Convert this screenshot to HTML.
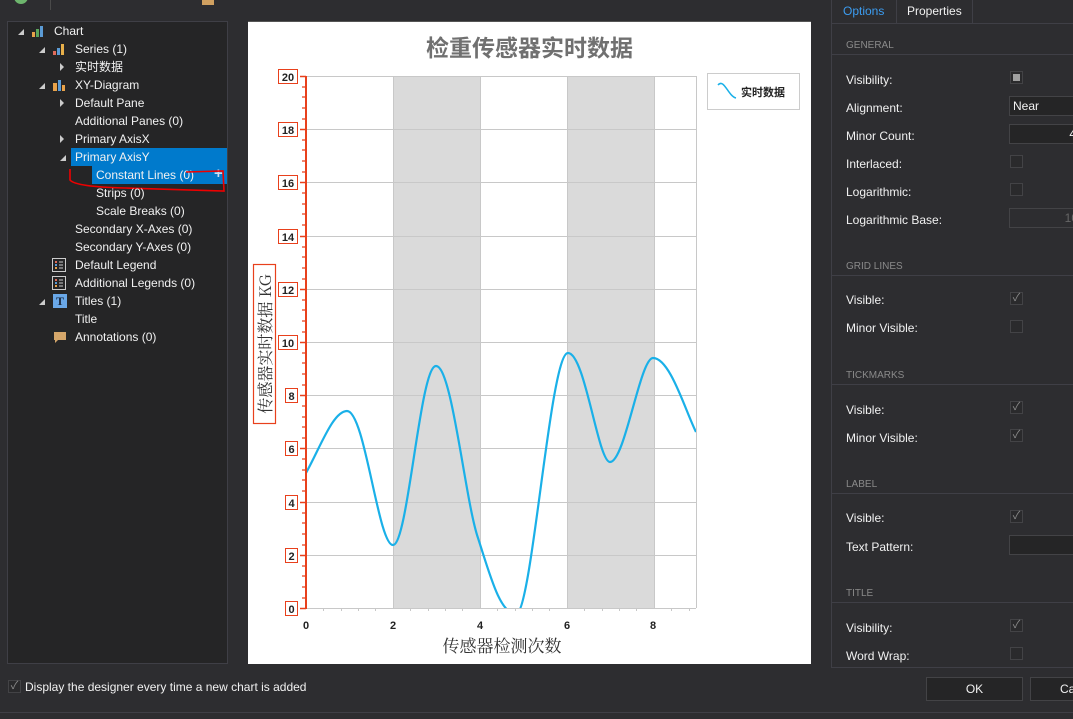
<!DOCTYPE html>
<html><head><meta charset="utf-8"><style>
*{margin:0;padding:0;box-sizing:border-box}
body{width:1073px;height:719px;background:#2d2d30;font-family:"Liberation Sans","Noto Sans CJK SC",sans-serif;font-size:12px;color:#f1f1f1;position:relative;overflow:hidden}
.a{position:absolute;white-space:nowrap}
.tree{left:7px;top:21px;width:221px;height:643px;background:#252526;border:1px solid #3f3f46}
.r{position:absolute;height:18px;line-height:18px}
.tri{position:absolute;width:0;height:0}
.cb{position:absolute;width:13px;height:13px;border:1px solid #434346;background:#2a2a2c}
.lbl{position:absolute;left:846px;line-height:14px}
.sec{position:absolute;left:846px;font-size:10px;color:#8a8a8a}
.hl{position:absolute;left:832px;width:241px;height:1px;background:#3f3f46}
.inp{position:absolute;left:1009px;width:80px;height:20px;border:1px solid #434346;background:#252526}
.ck{color:#8c8c8c;font-size:11px;line-height:11px;text-align:center}
</style></head><body>
<div class="a" style="left:14px;top:-6px;width:14px;height:10px;border-radius:0 0 7px 7px;background:#6db56d"></div>
<div class="a" style="left:50px;top:0;width:1px;height:10px;background:#4a4a4a"></div>
<div class="a" style="left:202px;top:0;width:12px;height:5px;background:#d0a060"></div>

<div class="a tree"></div>
<div class="tri" style="left:18px;top:29px;border-left:6px solid transparent;border-bottom:6px solid #ccc"></div>
<svg class="a" style="left:31px;top:24px" width="14" height="14"><rect x="1" y="8" width="3" height="5" fill="#e8a24a"/><rect x="5" y="5" width="3" height="8" fill="#5ba55b"/><rect x="9" y="2" width="3" height="11" fill="#5b9bd5"/></svg>
<div class="r a" style="left:54px;top:22px">Chart</div>
<div class="tri" style="left:39px;top:47px;border-left:6px solid transparent;border-bottom:6px solid #ccc"></div>
<svg class="a" style="left:52px;top:42px" width="14" height="14"><rect x="1" y="9" width="3" height="4" fill="#e06c5a"/><rect x="5" y="6" width="3" height="7" fill="#5b9bd5"/><rect x="9" y="2" width="3" height="11" fill="#e8b04a"/></svg>
<div class="r a" style="left:75px;top:40px">Series (1)</div>
<div class="tri" style="left:60px;top:63px;border-top:4px solid transparent;border-bottom:4px solid transparent;border-left:4px solid #ccc"></div>
<div class="r a" style="left:75px;top:58px">实时数据</div>
<div class="tri" style="left:39px;top:83px;border-left:6px solid transparent;border-bottom:6px solid #ccc"></div>
<svg class="a" style="left:52px;top:78px" width="14" height="14"><rect x="1" y="5" width="4" height="8" fill="#e8a24a"/><rect x="6" y="2" width="3" height="11" fill="#5b9bd5"/><rect x="10" y="7" width="3" height="6" fill="#e8a24a"/></svg>
<div class="r a" style="left:75px;top:76px">XY-Diagram</div>
<div class="tri" style="left:60px;top:99px;border-top:4px solid transparent;border-bottom:4px solid transparent;border-left:4px solid #ccc"></div>
<div class="r a" style="left:75px;top:94px">Default Pane</div>
<div class="r a" style="left:75px;top:112px">Additional Panes (0)</div>
<div class="tri" style="left:60px;top:135px;border-top:4px solid transparent;border-bottom:4px solid transparent;border-left:4px solid #ccc"></div>
<div class="r a" style="left:75px;top:130px">Primary AxisX</div>
<div class="a" style="left:71px;top:148px;width:156px;height:18px;background:#007acc"></div>
<div class="tri" style="left:60px;top:155px;border-left:6px solid transparent;border-bottom:6px solid #ccc"></div>
<div class="r a" style="left:75px;top:148px">Primary AxisY</div>
<div class="a" style="left:92px;top:166px;width:135px;height:18px;background:#007acc"></div>
<div class="r a" style="left:96px;top:166px">Constant Lines (0)</div>
<div class="r a" style="left:214px;top:165px;font-size:15px;font-weight:bold;color:#cde">+</div>
<svg class="a" style="left:66px;top:166px" width="164" height="30"><path d="M4,3 L4,14 Q10,21 60,22 L158,25 L157,5 L120,6" fill="none" stroke="#e00" stroke-width="1.6"/></svg>
<div class="r a" style="left:96px;top:184px">Strips (0)</div>
<div class="r a" style="left:96px;top:202px">Scale Breaks (0)</div>
<div class="r a" style="left:75px;top:220px">Secondary X-Axes (0)</div>
<div class="r a" style="left:75px;top:238px">Secondary Y-Axes (0)</div>
<svg class="a" style="left:52px;top:258px" width="15" height="15"><rect x="0.5" y="0.5" width="13" height="13" fill="none" stroke="#ccc"/><rect x="3" y="3" width="2" height="2" fill="#e06c5a"/><rect x="3" y="6" width="2" height="2" fill="#5b9bd5"/><rect x="3" y="9" width="2" height="2" fill="#e8a24a"/><path d="M7,4h4M7,7h4M7,10h4" stroke="#ccc"/></svg>
<div class="r a" style="left:75px;top:256px">Default Legend</div>
<svg class="a" style="left:52px;top:276px" width="15" height="15"><rect x="0.5" y="0.5" width="13" height="13" fill="none" stroke="#ccc"/><rect x="3" y="3" width="2" height="2" fill="#e06c5a"/><rect x="3" y="6" width="2" height="2" fill="#5b9bd5"/><rect x="3" y="9" width="2" height="2" fill="#e8a24a"/><path d="M7,4h4M7,7h4M7,10h4" stroke="#ccc"/></svg>
<div class="r a" style="left:75px;top:274px">Additional Legends (0)</div>
<div class="tri" style="left:39px;top:299px;border-left:6px solid transparent;border-bottom:6px solid #ccc"></div>
<div class="a" style="left:53px;top:294px;width:14px;height:14px;background:#6aa8e8;color:#1a2a40;font:bold 12px 'Liberation Serif',serif;text-align:center;line-height:14px">T</div>
<div class="r a" style="left:75px;top:292px">Titles (1)</div>
<div class="r a" style="left:75px;top:310px">Title</div>
<svg class="a" style="left:53px;top:331px" width="14" height="14"><path d="M1,1h12v8h-8l-3,3v-3h-1z" fill="#d4a66a"/></svg>
<div class="r a" style="left:75px;top:328px">Annotations (0)</div>

<div class="a" style="left:248px;top:21px;width:563px;height:643px;background:#fff;border-top:1px solid #555"></div>
<div class="a" style="left:248px;top:29px;width:563px;text-align:center;font:bold 23px 'Noto Sans CJK SC',sans-serif;color:#707070">检重传感器实时数据</div>
<svg class="a" style="left:0;top:0" width="1073" height="719">
<defs><clipPath id="c"><rect x="306" y="76" width="390" height="532"/></clipPath></defs>
<rect x="393" y="76" width="87" height="532" fill="#dadada"/>
<rect x="567" y="76" width="87" height="532" fill="#dadada"/>
<g stroke="#c8c8c8" stroke-width="1">
<path d="M306,76.5H696M306,129.5H696M306,182.5H696M306,236.5H696M306,289.5H696M306,342.5H696M306,395.5H696M306,448.5H696M306,502.5H696M306,555.5H696M306,608.5H696"/>
<path d="M393.5,76V608M480.5,76V608M567.5,76V608M654.5,76V608M696.5,76V608"/>
<path d="M323.5,608v3M341.5,608v3M358.5,608v3M375.5,608v3M410.5,608v3M428.5,608v3M445.5,608v3M462.5,608v3M497.5,608v3M515.5,608v3M532.5,608v3M549.5,608v3M584.5,608v3M602.5,608v3M619.5,608v3M636.5,608v3M671.5,608v3M689.5,608v3"/>
</g>
<path clip-path="url(#c)" d="M306,473 C320,448 333,411 347,411 C365,411 378,545 393,545 C408,545 420,366 436,366 C452,366 465,500 478,538 C490,575 500,614 516,614 C532,614 550,353 568,353 C585,353 598,462 610,462 C625,462 640,358 653,358 C670,358 685,410 696,432" fill="none" stroke="#1ab0e8" stroke-width="2.2"/>
<path d="M306,76V609" stroke="#e8401c" stroke-width="2"/>
<path d="M300,76.5h6M300,129.5h6M300,182.5h6M300,236.5h6M300,289.5h6M300,342.5h6M300,395.5h6M300,448.5h6M300,502.5h6M300,555.5h6M300,608.5h6" stroke="#e8401c" stroke-width="1.5"/>
<path d="M302,87h4M302,97h4M302,108h4M302,119h4M302,140h4M302,150h4M302,161h4M302,172h4M302,193h4M302,204h4M302,214h4M302,225h4M302,247h4M302,257h4M302,268h4M302,279h4M302,300h4M302,310h4M302,321h4M302,332h4M302,353h4M302,363h4M302,374h4M302,385h4M302,406h4M302,417h4M302,427h4M302,438h4M302,459h4M302,470h4M302,480h4M302,491h4M302,513h4M302,523h4M302,534h4M302,545h4M302,566h4M302,576h4M302,587h4M302,598h4" stroke="#e8401c" stroke-width="1.2"/>
<g fill="none" stroke="#e8401c" stroke-width="1">
<rect x="278.5" y="69.5" width="19" height="14"/><rect x="278.5" y="122.5" width="19" height="14"/><rect x="278.5" y="175.5" width="19" height="14"/><rect x="278.5" y="229.5" width="19" height="14"/><rect x="278.5" y="282.5" width="19" height="14"/><rect x="278.5" y="335.5" width="19" height="14"/>
<rect x="285.5" y="388.5" width="12" height="14"/><rect x="285.5" y="441.5" width="12" height="14"/><rect x="285.5" y="495.5" width="12" height="14"/><rect x="285.5" y="548.5" width="12" height="14"/><rect x="285.5" y="601.5" width="12" height="14"/>
</g>
<rect x="253.5" y="264.5" width="22" height="159" fill="none" stroke="#e8401c" stroke-width="1.2"/>
<g font-family="Liberation Sans" font-weight="bold" font-size="11" fill="#222" text-anchor="middle">
<text x="288" y="81">20</text><text x="288" y="134">18</text><text x="288" y="187">16</text><text x="288" y="241">14</text><text x="288" y="294">12</text><text x="288" y="347">10</text>
<text x="291.5" y="400">8</text><text x="291.5" y="453">6</text><text x="291.5" y="507">4</text><text x="291.5" y="560">2</text><text x="291.5" y="613">0</text>
<text x="306" y="629">0</text><text x="393" y="629">2</text><text x="480" y="629">4</text><text x="567" y="629">6</text><text x="653" y="629">8</text>
</g>
<text transform="translate(271,344) rotate(-90)" text-anchor="middle" font-family="Noto Serif CJK SC,Liberation Serif,serif" font-size="16" fill="#333">传感器实时数据 KG</text>
<text x="502" y="652" text-anchor="middle" font-family="Noto Serif CJK SC,serif" font-size="17" fill="#333">传感器检测次数</text>
<rect x="707.5" y="73.5" width="92" height="36" fill="#fff" stroke="#ccc"/>
<path d="M718,85 C724,78 728,96 736,98" fill="none" stroke="#1ab0e8" stroke-width="1.5"/>
<text x="741" y="96" font-family="Noto Sans CJK SC,sans-serif" font-size="11" font-weight="bold" fill="#222">实时数据</text>
</svg>

<div class="a" style="left:831px;top:0;width:1px;height:668px;background:#3f3f46"></div>
<div class="a" style="left:831px;top:23px;width:242px;height:1px;background:#3f3f46"></div>
<div class="a" style="left:896px;top:0;width:77px;height:24px;border-left:1px solid #3f3f46;border-right:1px solid #3f3f46;border-bottom:1px solid #3f3f46;background:#2d2d30"></div>
<div class="a" style="left:843px;top:4px;color:#3c9cf0">Options</div>
<div class="a" style="left:907px;top:4px">Properties</div>
<div class="sec" style="top:40px">GENERAL</div><div class="hl" style="top:54px"></div>
<div class="lbl" style="top:73px">Visibility:</div>
<div class="cb" style="left:1010px;top:71px"><div style="margin:2px;width:7px;height:7px;background:#a0a0a0"></div></div>
<div class="lbl" style="top:101px">Alignment:</div>
<div class="inp" style="top:96px;padding-left:3px;line-height:18px">Near</div>
<div class="lbl" style="top:129px">Minor Count:</div>
<div class="inp" style="top:124px;width:70px;text-align:right;line-height:18px;padding-right:2px">4</div>
<div class="lbl" style="top:157px">Interlaced:</div><div class="cb" style="left:1010px;top:155px"></div>
<div class="lbl" style="top:185px">Logarithmic:</div><div class="cb" style="left:1010px;top:183px"></div>
<div class="lbl" style="top:213px">Logarithmic Base:</div>
<div class="inp" style="top:208px;width:70px;text-align:right;line-height:18px;color:#666;background:#2d2d30">10</div>
<div class="sec" style="top:261px">GRID LINES</div><div class="hl" style="top:275px"></div>
<div class="lbl" style="top:293px">Visible:</div><div class="cb ck" style="left:1010px;top:292px">✓</div>
<div class="lbl" style="top:321px">Minor Visible:</div><div class="cb" style="left:1010px;top:320px"></div>
<div class="sec" style="top:370px">TICKMARKS</div><div class="hl" style="top:384px"></div>
<div class="lbl" style="top:403px">Visible:</div><div class="cb ck" style="left:1010px;top:401px">✓</div>
<div class="lbl" style="top:431px">Minor Visible:</div><div class="cb ck" style="left:1010px;top:429px">✓</div>
<div class="sec" style="top:479px">LABEL</div><div class="hl" style="top:493px"></div>
<div class="lbl" style="top:511px">Visible:</div><div class="cb ck" style="left:1010px;top:510px">✓</div>
<div class="lbl" style="top:540px">Text Pattern:</div><div class="inp" style="top:535px"></div>
<div class="sec" style="top:588px">TITLE</div><div class="hl" style="top:602px"></div>
<div class="lbl" style="top:621px">Visibility:</div><div class="cb ck" style="left:1010px;top:619px">✓</div>
<div class="lbl" style="top:649px">Word Wrap:</div><div class="cb" style="left:1010px;top:647px"></div>
<div class="hl" style="top:667px"></div>
<div class="a" style="left:926px;top:677px;width:97px;height:24px;border:1px solid #434346;background:#252526;text-align:center;line-height:22px">OK</div>
<div class="a" style="left:1030px;top:677px;width:60px;height:24px;border:1px solid #434346;background:#252526;line-height:22px;padding-left:29px">Cancel</div>

<div class="cb ck" style="left:8px;top:680px">✓</div>
<div class="a" style="left:25px;top:680px">Display the designer every time a new chart is added</div>
<div class="a" style="left:0;top:712px;width:1073px;height:1px;background:#3f3f46"></div>
</body></html>
